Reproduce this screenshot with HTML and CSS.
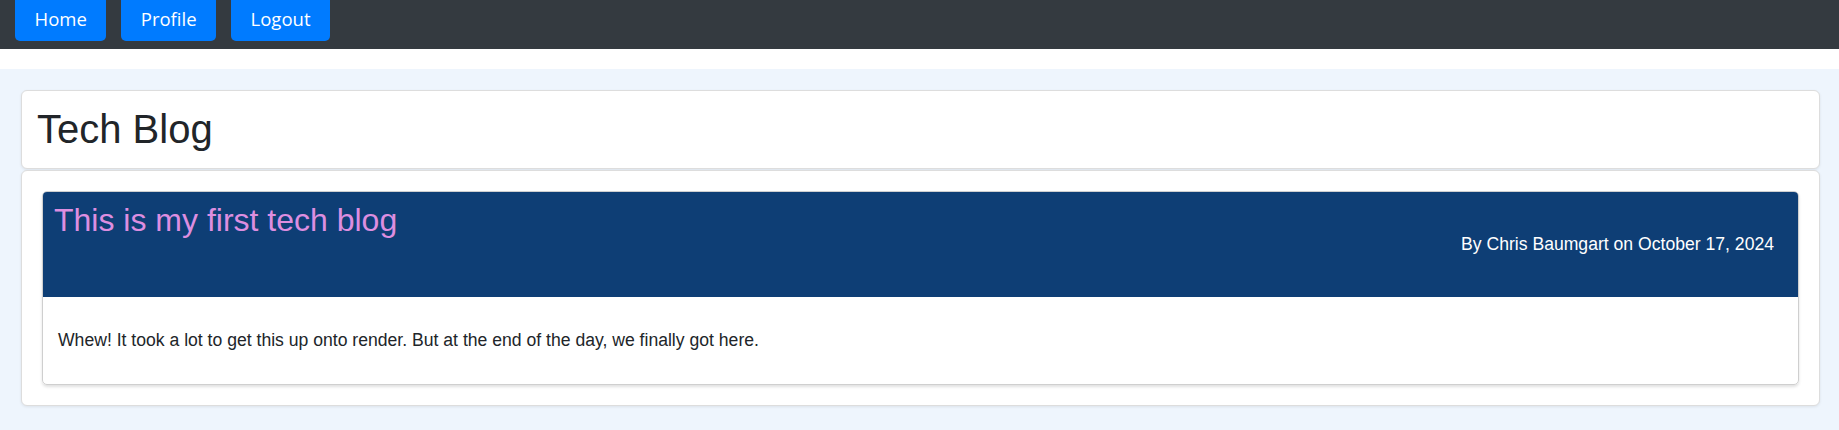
FILE: index.html
```html
<!DOCTYPE html>
<html lang="en">
<head>
<meta charset="utf-8">
<title>Tech Blog</title>
<link rel="stylesheet" href="styles.css">
</head>
<body>
<nav class="navbar">
  <a class="nav-btn" href="#">Home</a>
  <a class="nav-btn" href="#">Profile</a>
  <a class="nav-btn" href="#">Logout</a>
</nav>
<main class="main">
  <section class="card title-card">
    <h1 class="site-title">Tech Blog</h1>
  </section>
  <section class="card posts-card">
    <article class="post">
      <header class="post-header">
        <h2 class="post-title">This is my first tech blog</h2>
        <p class="post-meta">By Chris Baumgart on October 17, 2024</p>
      </header>
      <div class="post-body">
        <p>Whew! It took a lot to get this up onto render. But at the end of the day, we finally got here.</p>
      </div>
    </article>
  </section>
</main>
</body>
</html>
```
FILE: styles.css
```css
* { box-sizing: border-box; }

html, body {
  margin: 0;
  padding: 0;
  background: #ffffff;
  font-family: "Liberation Sans", Arial, sans-serif;
  color: #212529;
}

.navbar {
  display: flex;
  align-items: flex-start;
  gap: 15px;
  height: 49px;
  padding-left: 15px;
  background: #343a40;
  overflow: hidden;
}

.nav-btn {
  display: block;
  height: 41px;
  padding: 0 19.5px 3px;
  line-height: 38px;
  background: #007bff;
  color: #ffffff;
  text-decoration: none;
  font-family: "Open Sans", "Noto Sans", sans-serif;
  font-size: 18.5px;
  border-radius: 0 0 5px 5px;
}

.main {
  margin-top: 20px;
  background: #eef5fd;
  padding: 21px 19px 25px 21px;
  min-height: 361px;
}

.card {
  background: #ffffff;
  border: 1px solid #dddddd;
  border-radius: 6px;
  box-shadow: 0 1px 3px rgba(0, 0, 0, 0.08);
}

.title-card {
  padding: 15px 15px 15px;
}

.site-title {
  margin: 0;
  font-size: 40px;
  font-weight: 400;
  line-height: 47px;
  color: #212529;
}

.posts-card {
  margin-top: 1px;
  padding: 20px 20px 20px 20px;
}

.post {
  border: 1px solid #cfcfcf;
  border-radius: 5px;
  box-shadow: 0 2px 3px rgba(0, 0, 0, 0.12);
  overflow: hidden;
}

.post-header {
  display: flex;
  justify-content: space-between;
  align-items: center;
  height: 106px;
  margin: -1px -1px 0;
  padding: 0 25px 0 12px;
  background: #0e3e75;
  border-radius: 5px 5px 0 0;
}

.post-title {
  align-self: flex-start;
  margin: 10px 0 0;
  font-size: 32px;
  font-weight: 400;
  line-height: 38px;
  color: #dd8ee0;
}

.post-meta {
  margin: 0;
  font-size: 17.6px;
  line-height: 28px;
  color: #ffffff;
}

.post-body {
  padding: 29px 15px 30px;
}

.post-body p {
  margin: 0;
  font-size: 17.6px;
  line-height: 28px;
  color: #212529;
}
```
